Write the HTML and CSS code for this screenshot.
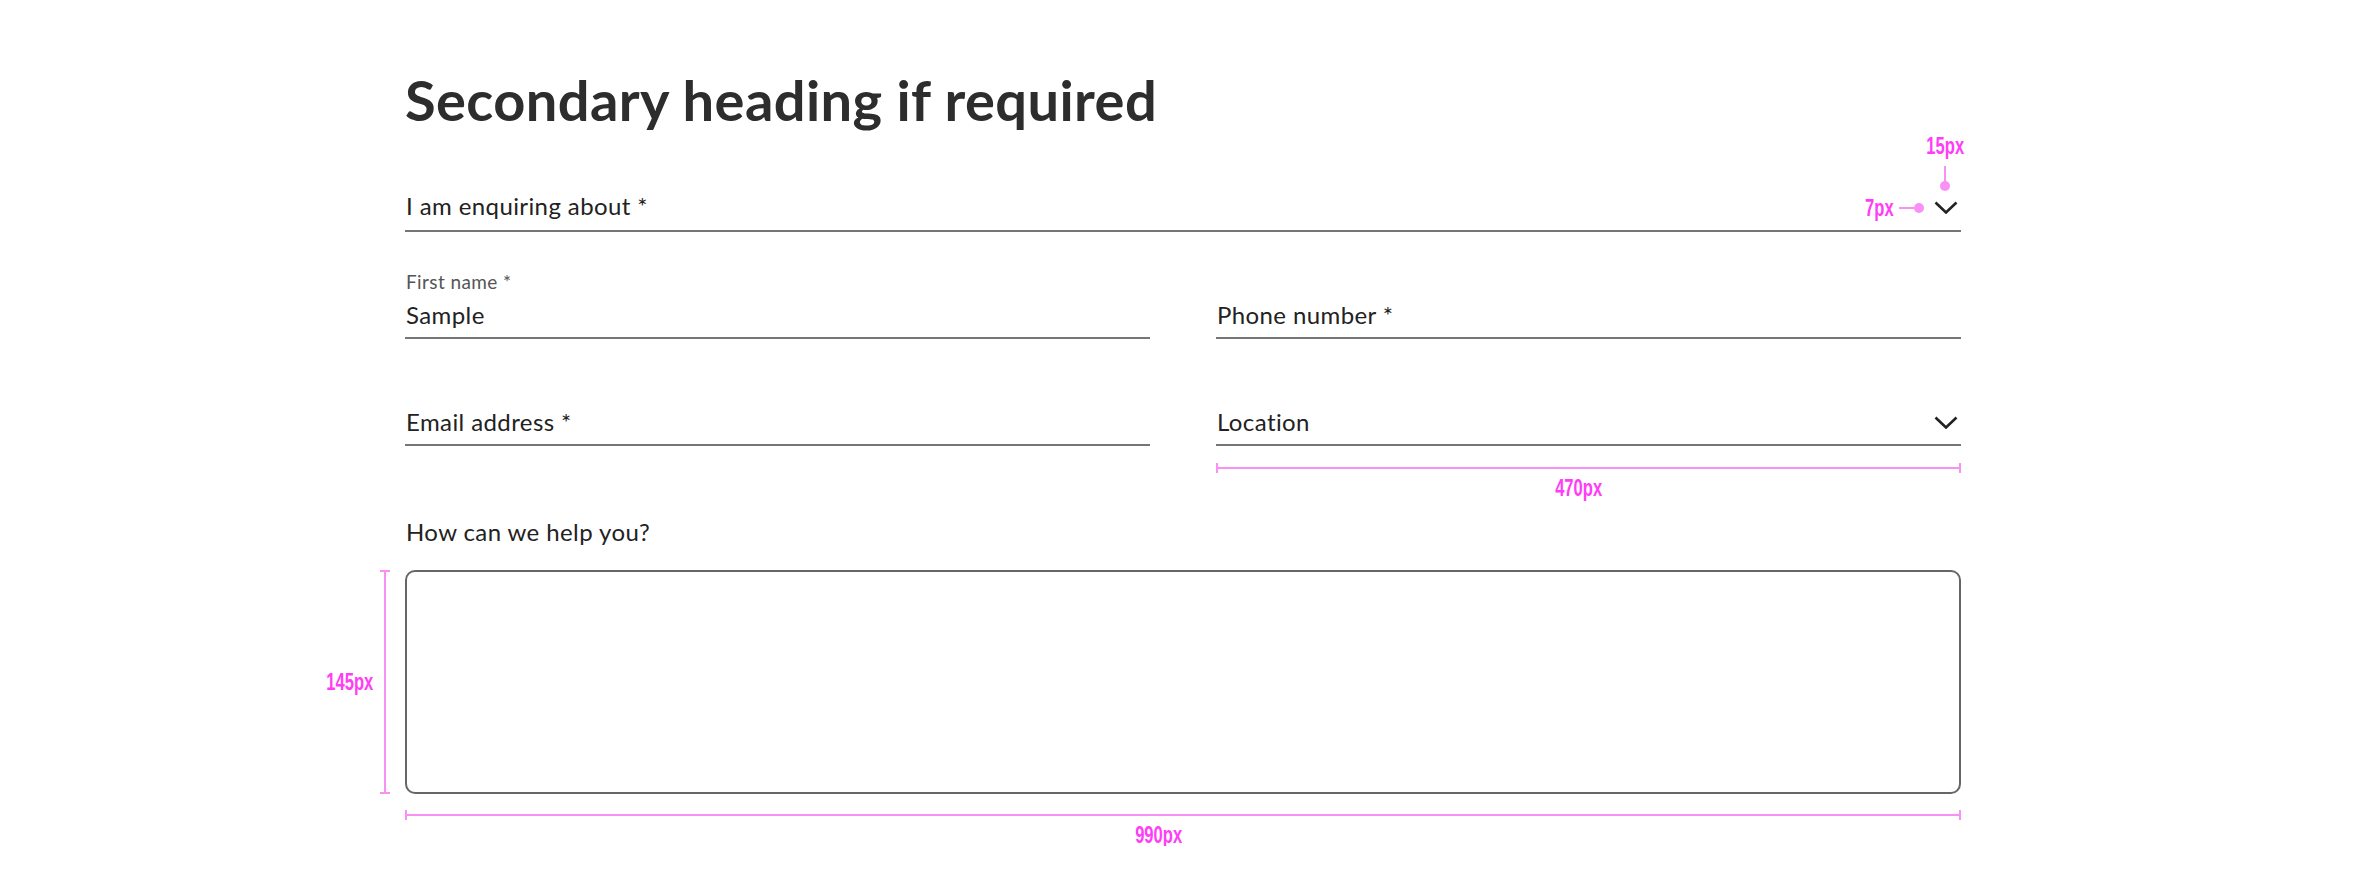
FILE: index.html
```html
<!DOCTYPE html>
<html lang="en">
<head>
<meta charset="utf-8">
<title>Form spec</title>
<link rel="stylesheet" href="styles.css">
</head>
<body>
<main class="form">
  <h1 class="heading">Secondary heading if required</h1>

  <div class="field select enquiry">
    <span class="text">I am enquiring about *</span>
    <svg class="chev" viewBox="0 0 24 13" width="24" height="13"><polyline points="1.5,1.5 12,11.5 22.5,1.5" fill="none" stroke="#222" stroke-width="2.6" stroke-linejoin="miter"/></svg>
    <div class="ann ann-7"><span class="ann-text">7px</span><span class="ann-hline"></span><span class="ann-dot"></span></div>
    <div class="ann ann-15"><span class="ann-text">15px</span><span class="ann-vline"></span><span class="ann-dot"></span></div>
  </div>

  <div class="grid">
    <div class="field filled">
      <span class="small">First name *</span>
      <span class="text">Sample</span>
    </div>
    <div class="field">
      <span class="text">Phone number *</span>
    </div>
    <div class="field">
      <span class="text">Email address *</span>
    </div>
    <div class="field select">
      <span class="text">Location</span>
      <svg class="chev" viewBox="0 0 24 13" width="24" height="13"><polyline points="1.5,1.5 12,11.5 22.5,1.5" fill="none" stroke="#222" stroke-width="2.6" stroke-linejoin="miter"/></svg>
      <div class="ann ann-470"><span class="ann-hbar"></span><span class="ann-text">470px</span></div>
    </div>
  </div>

  <div class="help-label">How can we help you?</div>
  <div class="textarea-wrap">
    <div class="textarea"></div>
    <div class="ann ann-145"><span class="ann-text">145px</span><span class="ann-vbar"></span></div>
  </div>
  <div class="dim dim-990"><span class="ann-hbar"></span><span class="ann-text">990px</span></div>
</main>
</body>
</html>
```

FILE: styles.css
```css
* { box-sizing: border-box; }

body {
  margin: 0;
  background: #ffffff;
  font-family: Lato, "Noto Sans", sans-serif;
  color: #222222;
}

.form {
  width: 1556px;
  margin: 0 auto;
  position: relative;
}

.heading {
  margin: 0;
  padding-top: 72px;
  font-size: 56px;
  line-height: 56px;
  font-weight: 700;
  color: #2d2d2d;
  letter-spacing: 0.4px;
}

.field {
  position: relative;
  display: flex;
  align-items: flex-end;
  justify-content: space-between;
  border-bottom: 2px solid #767676;
  padding: 0 0 8px 1px;
  height: 107px;
}

.field.enquiry {
  height: 104px;
  padding-bottom: 10px;
}

.field.filled {
  flex-direction: column;
  align-items: flex-start;
  justify-content: flex-end;
}

.text {
  font-size: 24px;
  line-height: 28px;
  letter-spacing: 0.4px;
  color: #222222;
}

.small {
  font-size: 19px;
  line-height: 22px;
  letter-spacing: 0.4px;
  color: #555555;
  margin-bottom: 8px;
}

.chev {
  display: block;
  margin: 0 3px 7px 0;
}

.enquiry .chev {
  margin-bottom: 6px;
}

.grid {
  display: grid;
  grid-template-columns: 745px 745px;
  column-gap: 66px;
}

.help-label {
  margin-top: 72px;
  padding-left: 1px;
  font-size: 24px;
  line-height: 28px;
  letter-spacing: 0.4px;
  color: #222222;
}

.textarea-wrap {
  position: relative;
  margin-top: 24px;
}

.textarea {
  height: 224px;
  border: 2px solid #666666;
  border-radius: 10px;
}

/* annotations */
.ann,
.dim {
  display: flex;
  align-items: center;
  font-family: "Liberation Sans", Arial, sans-serif;
  font-weight: 700;
  font-size: 23px;
  line-height: 22px;
  color: #ff3cf6;
}

.ann {
  position: absolute;
}

.ann-text {
  display: inline-block;
  transform: scaleX(0.72);
  flex: none;
}

.ann-dot {
  width: 10px;
  height: 10px;
  border-radius: 50%;
  background: #f990f5;
  flex: none;
}

.ann-hline {
  width: 15px;
  height: 2px;
  background: #f990f5;
  flex: none;
}

.ann-vline {
  width: 2px;
  height: 15px;
  background: #f990f5;
  flex: none;
}

.ann-7 {
  right: 37px;
  top: 69px;
  height: 22px;
}

.ann-7 .ann-text {
  transform-origin: right center;
  margin-right: 5px;
}

.ann-15 {
  right: -4px;
  top: 7px;
  width: 40px;
  flex-direction: column;
}

.ann-15 .ann-vline { margin-top: 9px; }

.ann-470 {
  left: 0;
  right: 0;
  top: 124px;
  flex-direction: column;
}

.ann-hbar {
  align-self: stretch;
  height: 10px;
  border-left: 2px solid #f990f5;
  border-right: 2px solid #f990f5;
  background: linear-gradient(#f990f5, #f990f5) center / 100% 2px no-repeat;
  flex: none;
}

.ann-470 .ann-text {
  margin: 4px 20px 0 0;
}

.dim-990 .ann-text {
  margin: 4px 48px 0 0;
}

.ann-145 {
  top: 0;
  bottom: 0;
  right: 100%;
  margin-right: 15px;
  justify-content: flex-end;
}

.ann-145 .ann-text {
  transform-origin: right center;
  margin-right: 7px;
}

.ann-vbar {
  align-self: stretch;
  width: 10px;
  border-top: 2px solid #f990f5;
  border-bottom: 2px solid #f990f5;
  background: linear-gradient(#f990f5, #f990f5) center / 2px 100% no-repeat;
  flex: none;
}

.dim-990 {
  flex-direction: column;
  margin-top: 16px;
}
```
